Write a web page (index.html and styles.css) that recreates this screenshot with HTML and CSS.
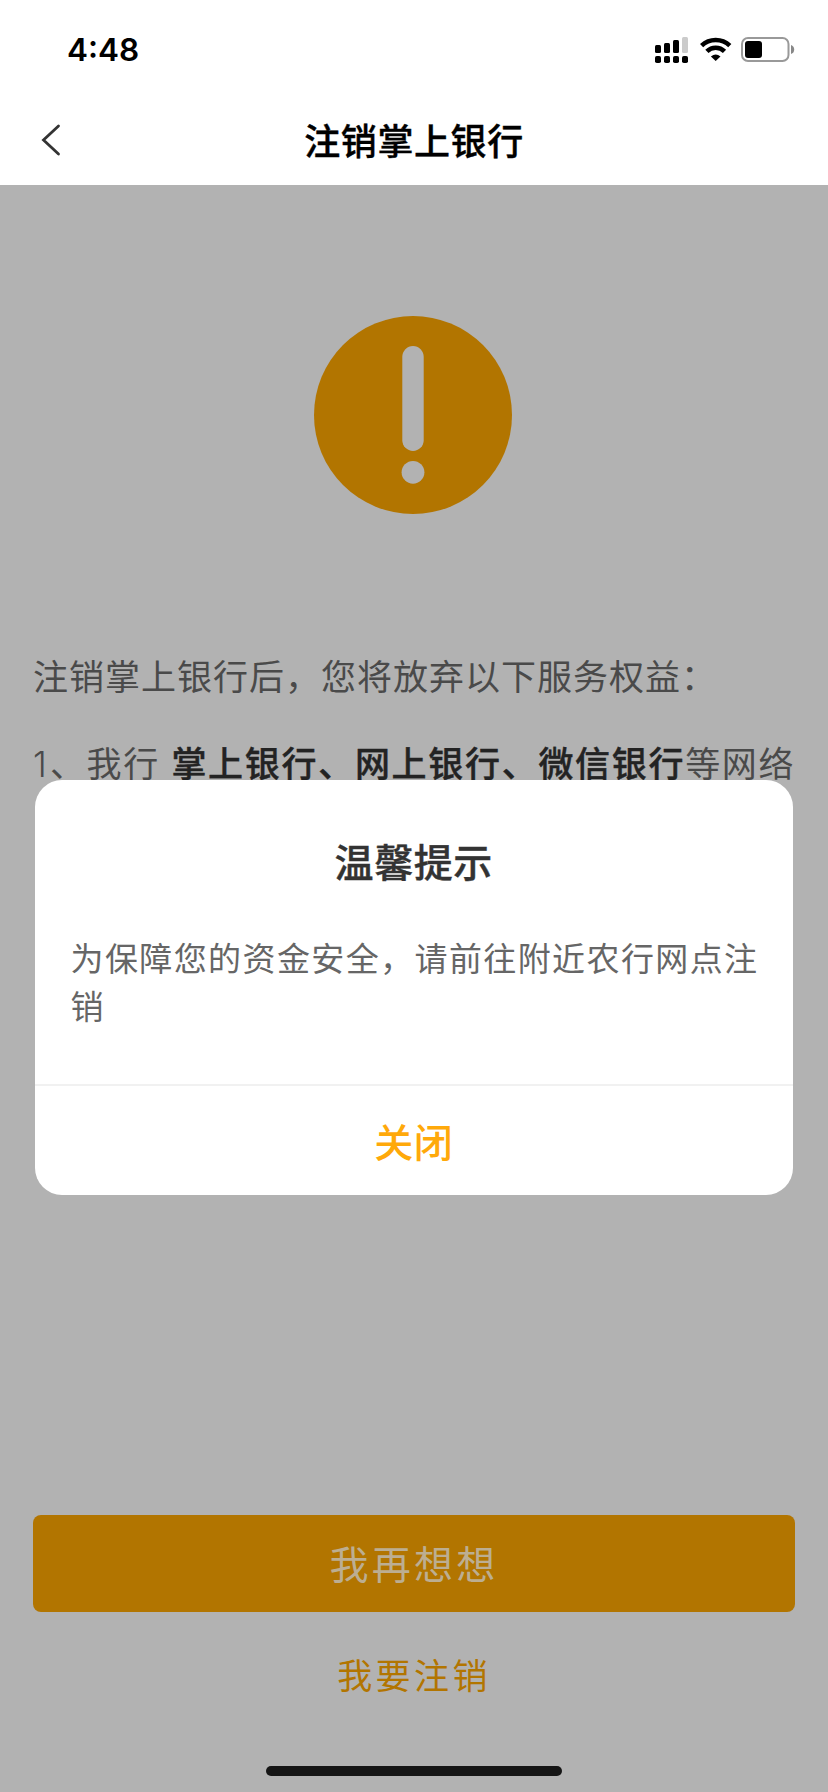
FILE: index.html
```html
<!DOCTYPE html>
<html lang="zh-CN">
<head>
<meta charset="utf-8">
<title>注销掌上银行</title>
<link rel="stylesheet" href="styles.css">
</head>
<body>
<div class="screen">
  <header class="top">
    <div class="status">
      <span class="time">4:48</span>
      <svg class="status-icons" width="140" height="28" viewBox="655 36 140 28">
        <rect x="655" y="45" width="6" height="8" rx="1.5"/>
        <rect x="664" y="43" width="6" height="10" rx="1.5"/>
        <rect x="673" y="40" width="6" height="13" rx="1.5"/>
        <rect x="682" y="37" width="6" height="16" rx="1.5" fill="#cbcbcb"/>
        <rect x="655" y="56" width="6" height="7" rx="1.8"/>
        <rect x="664" y="56" width="6" height="7" rx="1.8"/>
        <rect x="673" y="56" width="6" height="7" rx="1.8"/>
        <rect x="682" y="56" width="6" height="7" rx="1.8"/>
        <path d="M701.6 45.6 A20.6 20.6 0 0 1 729.8 45.6" fill="none" stroke="#000" stroke-width="4.6"/>
        <path d="M706.9 51.4 A12.6 12.6 0 0 1 724.5 51.4" fill="none" stroke="#000" stroke-width="4.6"/>
        <path d="M715.7 61 L710.9 56.5 Q715.7 52.4 720.5 56.5 Z"/>
        <rect x="742" y="38" width="46.5" height="23" rx="6" fill="none" stroke="#999" stroke-width="2"/>
        <rect x="745" y="41" width="17" height="17" rx="3"/>
        <path d="M791 45 Q794.2 46 794.2 49.5 Q794.2 53 791 54 Z" fill="#888"/>
      </svg>
    </div>
    <nav class="navbar">
      <svg class="back" width="20" height="34" viewBox="0 0 20 34"><path d="M17.5 3 L2.5 17 L17.5 31" fill="none" stroke="#333" stroke-width="2.8" stroke-linecap="round" stroke-linejoin="miter"/></svg>
      <h1 class="nav-title">注销掌上银行</h1>
    </nav>
  </header>
  <main class="content">
    <svg class="warning" width="200" height="200" viewBox="0 0 200 200">
      <circle cx="100" cy="100" r="99" fill="#b27500"/>
      <rect x="89.3" y="31" width="21.4" height="105" rx="10.7" fill="#b2b2b2"/>
      <circle cx="100" cy="157.3" r="11.4" fill="#b2b2b2"/>
    </svg>
    <p class="lead">注销掌上银行后，您将放弃以下服务权益：</p>
    <p class="item"><span class="item-num"><span class="digit">1</span>、我行</span><b>掌上银行、网上银行、微信银行</b><span>等网络</span></p>
    <div class="actions">
      <button class="primary">我再想想</button>
      <button class="secondary">我要注销</button>
      <div class="home-bar"></div>
    </div>
  </main>
  <section class="dialog">
    <h2 class="dialog-title">温馨提示</h2>
    <p class="dialog-text">为保障您的资金安全，请前往附近农行网点注销</p>
    <button class="dialog-close">关闭</button>
  </section>
</div>
</body>
</html>
```
FILE: styles.css
```css
* { box-sizing: border-box; }
body, h1, h2, p { margin: 0; }
button { border: 0; padding: 0; background: none; font: inherit; }

body {
  width: 828px;
  height: 1792px;
  overflow: hidden;
  background: #b2b2b2;
  font-family: "Noto Sans CJK SC", sans-serif;
}

.screen {
  position: relative;
  display: flex;
  flex-direction: column;
  height: 1792px;
}

.top { height: 185px; background: #fff; }

.status {
  display: flex;
  justify-content: space-between;
  align-items: center;
  height: 100px;
  padding: 0 33px 0 67px;
}

.time {
  padding-bottom: 1px;
  font: 600 31.5px/40px Inter, sans-serif;
  color: #000;
}

.status-icons { display: block; }

.navbar {
  display: grid;
  grid-template-columns: 60px 1fr 60px;
  align-items: center;
  height: 80px;
}

.back { display: block; margin-left: 41px; }

.nav-title {
  padding-bottom: 3px;
  font-size: 36px;
  font-weight: 500;
  line-height: 50px;
  letter-spacing: 0.6px;
  text-align: center;
  color: #000;
  -webkit-text-stroke: 0.4px #000;
}

.content {
  display: flex;
  flex-direction: column;
  flex: 1;
  padding: 130px 33px 16px;
}

.warning { display: block; margin-left: 280px; }

.lead {
  margin-top: 135px;
  font-size: 35px;
  font-weight: 400;
  line-height: 50px;
  letter-spacing: 1px;
  white-space: nowrap;
  color: #4a4a4a;
}

.item {
  display: flex;
  margin-top: 37px;
  font-size: 35px;
  font-weight: 400;
  line-height: 50px;
  letter-spacing: 1.6px;
  white-space: nowrap;
  color: #4a4a4a;
}

.item-num { width: 139px; }

.digit {
  display: inline-block;
  width: 17px;
  font-family: Inter, sans-serif;
  font-weight: 300;
  line-height: 40px;
}

.item b {
  font-weight: 500;
  letter-spacing: 1.7px;
  color: #232323;
  -webkit-text-stroke: 0.4px #232323;
}

.actions {
  display: flex;
  flex-direction: column;
  align-items: center;
  margin-top: auto;
}

.primary {
  width: 762px;
  height: 97px;
  padding-bottom: 3px;
  border-radius: 8px;
  background: #b27500;
  color: #bcae92;
  font-size: 39px;
  font-weight: 400;
  letter-spacing: 3.3px;
}

.secondary {
  margin-top: 37px;
  height: 50px;
  color: #b27500;
  font-size: 35px;
  font-weight: 400;
  line-height: 50px;
  letter-spacing: 3.4px;
}

.home-bar {
  width: 296px;
  height: 10px;
  margin-top: 67px;
  border-radius: 5px;
  background: #151515;
}

.dialog {
  position: absolute;
  top: 780px;
  left: 35px;
  display: flex;
  flex-direction: column;
  width: 757.5px;
  height: 415px;
  padding-top: 52px;
  border-radius: 27px;
  background: #fff;
}

.dialog-title {
  font-size: 39px;
  font-weight: 500;
  line-height: 56px;
  letter-spacing: 0.6px;
  text-align: center;
  color: #333;
  -webkit-text-stroke: 0.4px #333;
}

.dialog-text {
  margin-top: 45px;
  padding: 0 30px 0 35.5px;
  font-size: 33px;
  font-weight: 400;
  line-height: 48px;
  letter-spacing: 1.4px;
  color: #666;
}

.dialog-close {
  height: 111px;
  margin-top: auto;
  padding-bottom: 2px;
  border-top: 2px solid #f1f1f1;
  color: #ffa90a;
  font-size: 39px;
  font-weight: 500;
  letter-spacing: 0.6px;
}
```
